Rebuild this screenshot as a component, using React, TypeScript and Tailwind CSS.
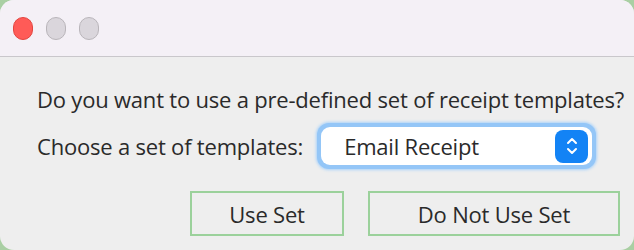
import { ChevronUp, ChevronDown } from 'lucide-react'

export default function App() {
  return (
    <div className="w-[634px] h-[250px] bg-[#a9cfa3]" style={{ fontFamily: '"Open Sans", "Noto Sans", sans-serif' }}>
      <div className="w-full h-full rounded-[14px] overflow-hidden bg-[#eeeeee] flex flex-col">
        {/* title bar */}
        <div className="h-[57px] bg-[#f4f0f6] border-b border-[#c9c7cb] flex items-center gap-[13px] px-[13px] shrink-0">
          <div className="w-[20px] h-[23px] rounded-full bg-[#ff5b57] border border-[#e3453f]" />
          <div className="w-[20px] h-[23px] rounded-full bg-[#dad6dc] border border-[#b9b5ba]" />
          <div className="w-[20px] h-[23px] rounded-full bg-[#dad6dc] border border-[#b9b5ba]" />
        </div>

        <div className="flex flex-col pl-[37px] pr-[13px] text-[#2a2a2a] text-[22px]">
          <p className="mt-[27px] leading-[30px] tracking-[-0.2px] whitespace-nowrap">Do you want to use a pre-defined set of receipt templates?</p>

          <div className="flex items-center mt-[9px]">
            <span className="leading-[30px] tracking-[-0.2px] whitespace-nowrap">Choose a set of templates:</span>
            <div className="ml-[14px] w-[279px] h-[46px] rounded-[12px] bg-[#94c6f7] p-[4px] shadow-[0_0_3px_1px_#a9d2fa]">
              <div className="w-full h-full rounded-[9px] bg-white flex items-center pl-[23px] pr-[4px]">
                <span className="flex-1 leading-[30px] tracking-[-0.2px]">Email Receipt</span>
                <div className="w-[33px] h-[33px] rounded-[8px] bg-[#1383f5] flex flex-col items-center justify-center text-white">
                  <ChevronUp size={16} strokeWidth={3} className="-mb-[3px]" />
                  <ChevronDown size={16} strokeWidth={3} className="-mt-[3px]" />
                </div>
              </div>
            </div>
          </div>

          <div className="flex justify-end gap-[24px] mt-[22px] pr-[1px]">
            <button className="w-[154px] h-[45px] border-2 border-[#9bd19b] leading-[30px] tracking-[-0.2px]">Use Set</button>
            <button className="w-[252px] h-[45px] border-2 border-[#9bd19b] leading-[30px] tracking-[-0.2px]">Do Not Use Set</button>
          </div>
        </div>
      </div>
    </div>
  )
}
